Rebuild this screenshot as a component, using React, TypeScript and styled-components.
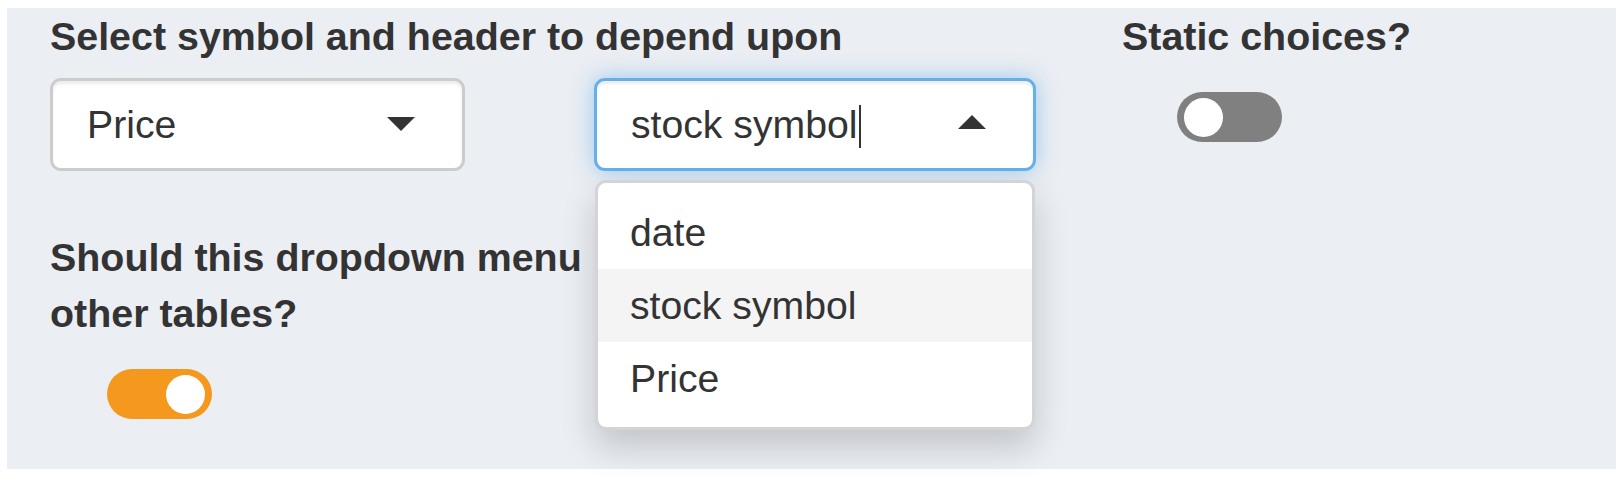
import React from "react";
import styled, { createGlobalStyle } from "styled-components";

const GlobalStyle = createGlobalStyle`
  html, body {
    margin: 0;
    background: #ffffff;
  }
  body {
    padding: 8px 7px 9px 7px;
    font-family: "Liberation Sans", Arial, Helvetica, sans-serif;
    color: #333333;
  }
  * { box-sizing: border-box; }
`;

const Panel = styled.div`
  display: flex;
  height: 461px;
  background: #ebeef3;
`;

const LeftCol = styled.div`
  width: 1073px;
  padding: 0 42px 0 43px;
`;

const RightCol = styled.div`
  flex: 1;
  padding-left: 42px;
`;

const FormGroup = styled.div<{ $gap?: number }>`
  margin-top: ${(p) => p.$gap ?? 0}px;
`;

const Label = styled.div<{ $maxWidth?: number }>`
  font-weight: 700;
  font-size: 39.4px;
  line-height: 56px;
  color: #333333;
  margin-bottom: 14px;
  max-width: ${(p) => (p.$maxWidth ? `${p.$maxWidth}px` : "none")};
`;

const SelectRow = styled.div`
  display: flex;
  align-items: flex-start;
`;

const SelectWrap = styled.div<{ $width: number; $offset?: number }>`
  position: relative;
  width: ${(p) => p.$width}px;
  margin-left: ${(p) => p.$offset ?? 0}px;
`;

const SelectBox = styled.div<{ $focused?: boolean }>`
  display: flex;
  align-items: center;
  height: 93px;
  padding: 0 47px 0 34px;
  background: #ffffff;
  border: 3px solid ${(p) => (p.$focused ? "#66afe9" : "#cccccc")};
  border-radius: 11px;
  font-size: 39.2px;
  color: #333333;
  box-shadow: ${(p) =>
    p.$focused
      ? "inset 0 3px 3px rgba(0,0,0,0.075), 0 0 22px rgba(102,175,233,0.6)"
      : "inset 0 3px 3px rgba(0,0,0,0.075)"};
`;

const SelectValue = styled.div`
  flex: 1;
  display: flex;
  align-items: center;
  line-height: 56px;
  white-space: nowrap;
`;

const Caret = styled.span`
  display: inline-block;
  width: 2px;
  height: 43px;
  margin-left: 2px;
  margin-top: 3px;
  background: #333333;
`;

const Arrow = styled.span<{ $up?: boolean }>`
  width: 0;
  height: 0;
  border-left: 14px solid transparent;
  border-right: 14px solid transparent;
  ${(p) =>
    p.$up
      ? "border-bottom: 14px solid #333333; margin-top: -6px;"
      : "border-top: 14px solid #333333; margin-top: -1px;"}
`;

const Dropdown = styled.div`
  position: absolute;
  z-index: 10;
  top: calc(100% + 9px);
  left: 1px;
  right: 1px;
  background: #ffffff;
  border: 3px solid #d4d4d4;
  border-radius: 11px;
  padding: 13px 0 12px 0;
  box-shadow: 0 17px 34px rgba(0, 0, 0, 0.175);
`;

const Option = styled.div<{ $active?: boolean }>`
  height: 73px;
  line-height: 73px;
  padding: 0 32px;
  font-size: 39.2px;
  color: #333333;
  background: ${(p) => (p.$active ? "#f4f4f4" : "transparent")};
  white-space: nowrap;
`;

const Switch = styled.div<{ $on?: boolean; $indent: number }>`
  display: flex;
  align-items: center;
  justify-content: ${(p) => (p.$on ? "flex-end" : "flex-start")};
  width: 105px;
  height: 50px;
  margin-left: ${(p) => p.$indent}px;
  margin-top: 28px;
  padding: 0 7px;
  border-radius: 25px;
  background: ${(p) => (p.$on ? "#f4991d" : "#808080")};
`;

const Knob = styled.span`
  width: 39px;
  height: 39px;
  border-radius: 50%;
  background: #ffffff;
`;

const options = ["date", "stock symbol", "Price"];

export default function App() {
  return (
    <>
      <GlobalStyle />
      <Panel>
        <LeftCol>
          <FormGroup>
            <Label>Select symbol and header to depend upon</Label>
            <SelectRow>
              <SelectWrap $width={415}>
                <SelectBox>
                  <SelectValue>Price</SelectValue>
                  <Arrow />
                </SelectBox>
              </SelectWrap>
              <SelectWrap $width={442} $offset={129}>
                <SelectBox $focused>
                  <SelectValue>
                    stock symbol
                    <Caret />
                  </SelectValue>
                  <Arrow $up />
                </SelectBox>
                <Dropdown>
                  {options.map((o) => (
                    <Option key={o} $active={o === "stock symbol"}>
                      {o}
                    </Option>
                  ))}
                </Dropdown>
              </SelectWrap>
            </SelectRow>
          </FormGroup>
          <FormGroup $gap={58}>
            <Label $maxWidth={545}>Should this dropdown menu other tables?</Label>
            <Switch $on $indent={57}>
              <Knob />
            </Switch>
          </FormGroup>
        </LeftCol>
        <RightCol>
          <Label>Static choices?</Label>
          <Switch $indent={55}>
            <Knob />
          </Switch>
        </RightCol>
      </Panel>
    </>
  );
}
